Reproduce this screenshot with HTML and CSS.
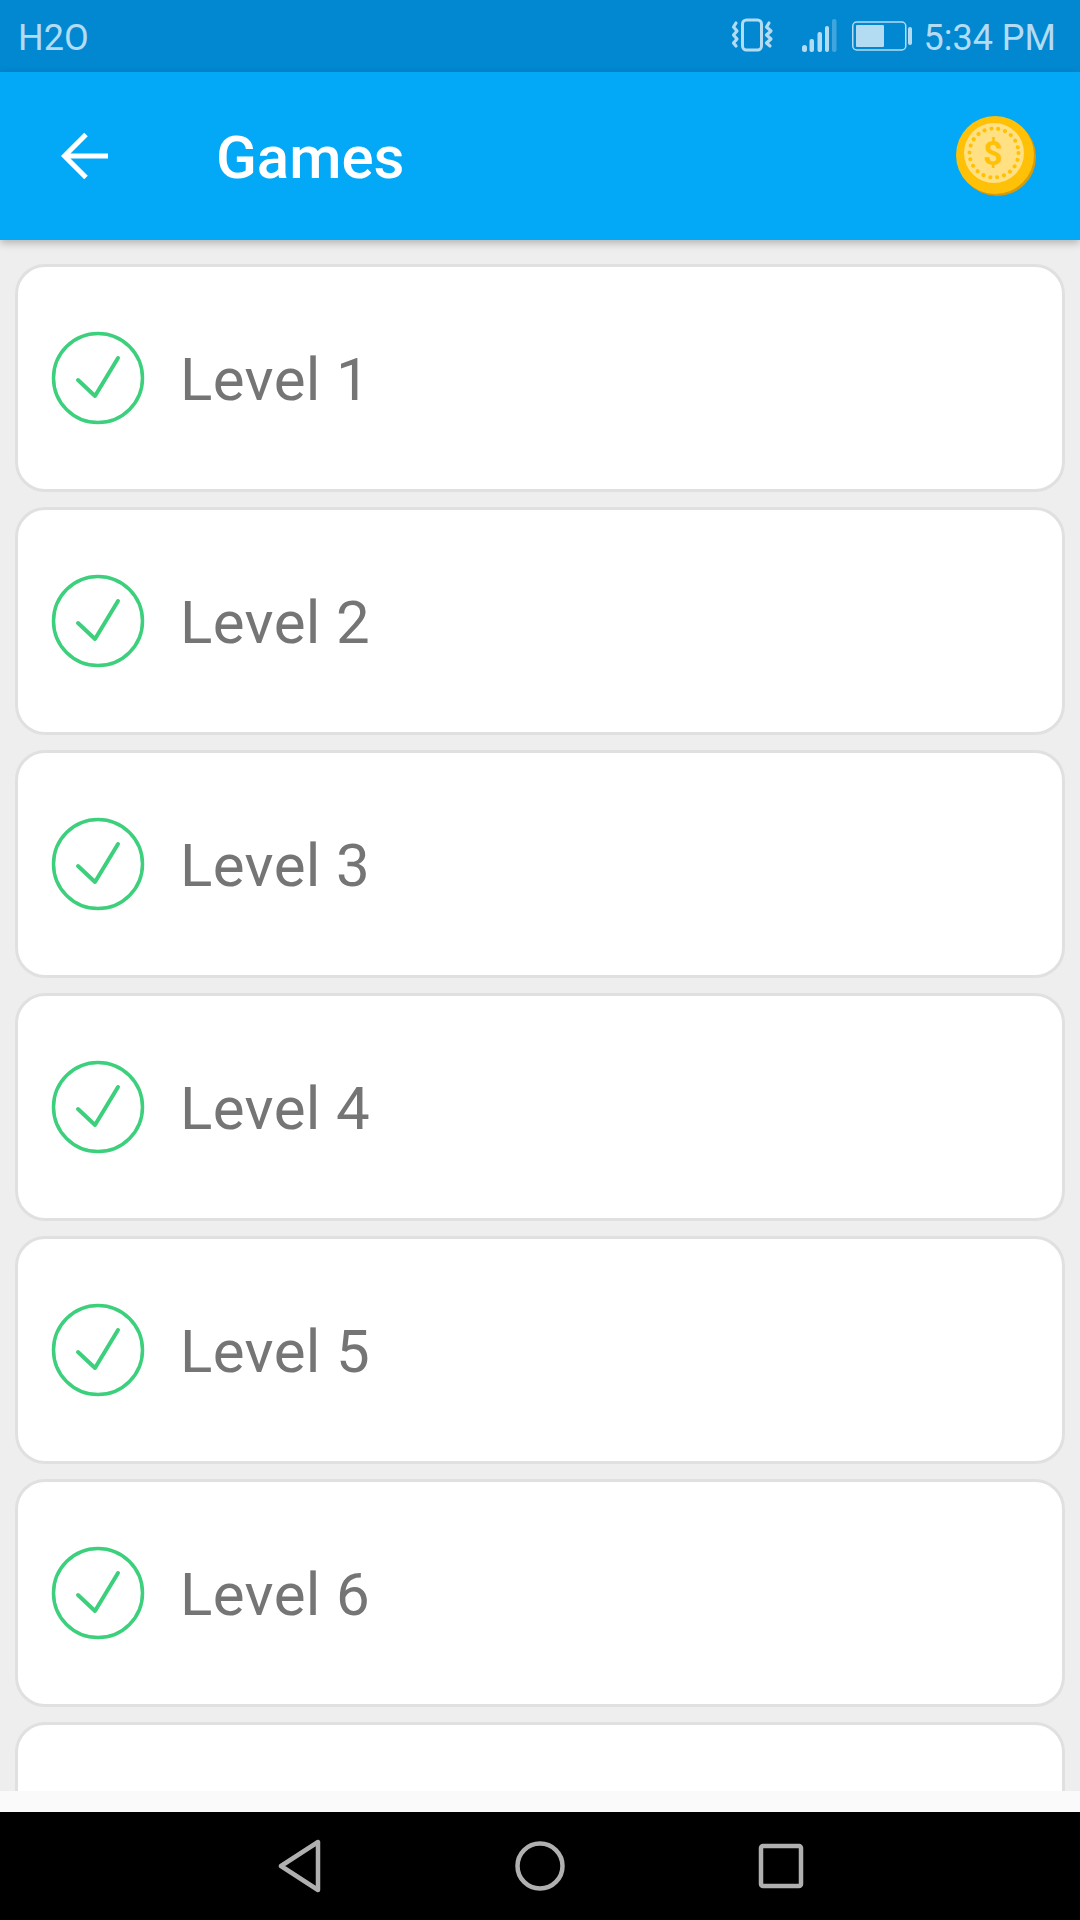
FILE: index.html
```html
<!DOCTYPE html>
<html lang="en">
<head>
<meta charset="utf-8">
<title>Games</title>
<link rel="stylesheet" href="styles.css">
</head>
<body>
<div class="screen">
  <header class="status-bar">
    <span class="carrier">H2O</span>
    <div class="status-right">
      <svg class="ico-vibrate" width="45" height="36" viewBox="-2 0 45 36">
        <rect x="10.5" y="2" width="19" height="30" rx="4" fill="none" stroke="#b3dcf3" stroke-width="3"/>
        <path d="M4 5 L1.5 9 L5 13 L1.5 17 L5 21 L1.5 25 L4 28" fill="none" stroke="#b3dcf3" stroke-width="3.200" stroke-linejoin="round" stroke-linecap="round"/>
        <path d="M37 5 L34.5 9 L39 13 L34.5 17 L39 21 L34.5 25 L38 28" fill="none" stroke="#b3dcf3" stroke-width="3.200" stroke-linejoin="round" stroke-linecap="round"/>
      </svg>
      <svg class="ico-signal" width="36" height="34" viewBox="0 0 36 34">
        <rect x="0" y="26" width="5" height="7" rx="2.5" fill="#b3dcf3"/>
        <rect x="7.500" y="20" width="4.500" height="13" rx="2" fill="#b3dcf3"/>
        <rect x="15.500" y="13" width="4.500" height="20" rx="2" fill="#b3dcf3"/>
        <rect x="23" y="7" width="4" height="26" rx="2" fill="#b3dcf3"/>
        <rect x="30" y="0" width="4.500" height="33" rx="2" fill="#b3dcf3" opacity="0.35"/>
      </svg>
      <svg class="ico-battery" width="61" height="31" viewBox="0 0 61 31">
        <rect x="0.750" y="1" width="53" height="28" rx="4" fill="none" stroke="#b3dcf3" stroke-width="1.500"/>
        <rect x="4" y="4" width="28" height="22" rx="1" fill="#b3dcf3"/>
        <rect x="56" y="6" width="4" height="18" rx="2" fill="#b3dcf3"/>
      </svg>
      <span class="clock">5:34 PM</span>
    </div>
  </header>

  <div class="app-bar">
    <svg class="ico-back" width="52" height="52" viewBox="0 0 52 52">
      <path d="M49 26 H6 M27 4.500 L5.500 26 L27 47.500" fill="none" stroke="#fff" stroke-width="5"/>
    </svg>
    <h1 class="title">Games</h1>
    <svg class="coin" width="84" height="84" viewBox="0 0 84 84">
      <circle cx="43" cy="43" r="39" fill="#d99a08"/>
      <circle cx="41" cy="41" r="39" fill="#ffc107"/>
      <circle cx="40" cy="39" r="30" fill="#ffe082"/>
      <circle cx="40" cy="39" r="24.500" fill="none" stroke="#ffc107" stroke-width="4" stroke-linecap="round" stroke-dasharray="0.100 6.900"/>
      <text class="coin-sign" x="39" y="51" text-anchor="middle">$</text>
    </svg>
  </div>

  <main class="levels">
    <div class="level">
      <svg class="check" width="94" height="94" viewBox="0 0 94 94"><circle cx="47" cy="47" r="44.500" fill="none" stroke="#3ccf7c" stroke-width="3.500"/><path d="M27 49 L44 65 L67 27" fill="none" stroke="#3ccf7c" stroke-width="4" stroke-linecap="round" stroke-linejoin="round"/></svg>
      <span class="level-name">Level 1</span>
    </div>
    <div class="level">
      <svg class="check" width="94" height="94" viewBox="0 0 94 94"><circle cx="47" cy="47" r="44.500" fill="none" stroke="#3ccf7c" stroke-width="3.500"/><path d="M27 49 L44 65 L67 27" fill="none" stroke="#3ccf7c" stroke-width="4" stroke-linecap="round" stroke-linejoin="round"/></svg>
      <span class="level-name">Level 2</span>
    </div>
    <div class="level">
      <svg class="check" width="94" height="94" viewBox="0 0 94 94"><circle cx="47" cy="47" r="44.500" fill="none" stroke="#3ccf7c" stroke-width="3.500"/><path d="M27 49 L44 65 L67 27" fill="none" stroke="#3ccf7c" stroke-width="4" stroke-linecap="round" stroke-linejoin="round"/></svg>
      <span class="level-name">Level 3</span>
    </div>
    <div class="level">
      <svg class="check" width="94" height="94" viewBox="0 0 94 94"><circle cx="47" cy="47" r="44.500" fill="none" stroke="#3ccf7c" stroke-width="3.500"/><path d="M27 49 L44 65 L67 27" fill="none" stroke="#3ccf7c" stroke-width="4" stroke-linecap="round" stroke-linejoin="round"/></svg>
      <span class="level-name">Level 4</span>
    </div>
    <div class="level">
      <svg class="check" width="94" height="94" viewBox="0 0 94 94"><circle cx="47" cy="47" r="44.500" fill="none" stroke="#3ccf7c" stroke-width="3.500"/><path d="M27 49 L44 65 L67 27" fill="none" stroke="#3ccf7c" stroke-width="4" stroke-linecap="round" stroke-linejoin="round"/></svg>
      <span class="level-name">Level 5</span>
    </div>
    <div class="level">
      <svg class="check" width="94" height="94" viewBox="0 0 94 94"><circle cx="47" cy="47" r="44.500" fill="none" stroke="#3ccf7c" stroke-width="3.500"/><path d="M27 49 L44 65 L67 27" fill="none" stroke="#3ccf7c" stroke-width="4" stroke-linecap="round" stroke-linejoin="round"/></svg>
      <span class="level-name">Level 6</span>
    </div>
    <div class="level"></div>
  </main>

  <div class="bottom-strip"></div>

  <nav class="nav-bar">
    <svg width="46" height="54" viewBox="0 0 46 54"><path d="M4 27 L41 3 V51 Z" fill="none" stroke="#b0b0b0" stroke-width="4.500" stroke-linejoin="round"/></svg>
    <svg width="52" height="52" viewBox="0 0 52 52"><circle cx="26" cy="26" r="22.500" fill="none" stroke="#b0b0b0" stroke-width="4.500"/></svg>
    <svg width="50" height="50" viewBox="0 0 50 50"><rect x="5" y="5" width="40" height="40" rx="2" fill="none" stroke="#b0b0b0" stroke-width="4.500"/></svg>
  </nav>
</div>
</body>
</html>
```

FILE: styles.css
```css
* {
  box-sizing: border-box;
}

html,
body {
  margin: 0;
  padding: 0;
}

body {
  font-family: Roboto, "Liberation Sans", sans-serif;
}

.screen {
  width: 1080px;
  height: 1920px;
  display: flex;
  flex-direction: column;
  background: #eeeeee;
  overflow: hidden;
}

/* System status bar */
.status-bar {
  height: 72px;
  flex: none;
  display: flex;
  align-items: center;
  justify-content: space-between;
  padding: 3px 24px 0 18px;
  background: #0288d1;
  color: #b3dcf3;
  font-size: 36px;
}

.status-right {
  display: flex;
  align-items: center;
  margin-top: -3px;
}

.clock {
  margin-top: 3px;
}

.ico-vibrate {
  margin-right: 27px;
}

.ico-signal {
  margin-right: 14px;
}

.ico-battery {
  margin-right: 11px;
}

/* Toolbar */
.app-bar {
  position: relative;
  z-index: 1;
  height: 168px;
  flex: none;
  display: flex;
  align-items: center;
  padding: 0 42px 0 59px;
  background: #03a9f6;
  box-shadow: 0 3px 8px rgba(0, 0, 0, 0.25);
}

.title {
  flex: 1;
  margin: 2px 0 0 105px;
  color: #ffffff;
  font-size: 60px;
  font-weight: 500;
}

.coin-sign {
  fill: #ffc107;
  font-family: Roboto, sans-serif;
  font-size: 34px;
  font-weight: 700;
}

/* Level list */
.levels {
  flex: 1;
  min-height: 0;
  overflow: hidden;
  display: flex;
  flex-direction: column;
  gap: 15px;
  padding: 24px 15px 0 15px;
}

.level {
  height: 228px;
  flex: none;
  display: flex;
  align-items: center;
  gap: 35px;
  padding-left: 33px;
  background: #ffffff;
  border: 3px solid #e0e0e0;
  border-radius: 30px;
}

.level-name {
  margin-top: 2px;
  color: #757575;
  font-size: 60px;
  letter-spacing: 0.4px;
}

.bottom-strip {
  height: 21px;
  flex: none;
  background: #fafafa;
}

/* On-screen navigation keys */
.nav-bar {
  height: 108px;
  flex: none;
  display: flex;
  align-items: center;
  gap: 190px;
  padding-left: 277px;
  background: #000000;
}

.nav-bar svg:first-child {
  margin-right: 1px;
}
```
